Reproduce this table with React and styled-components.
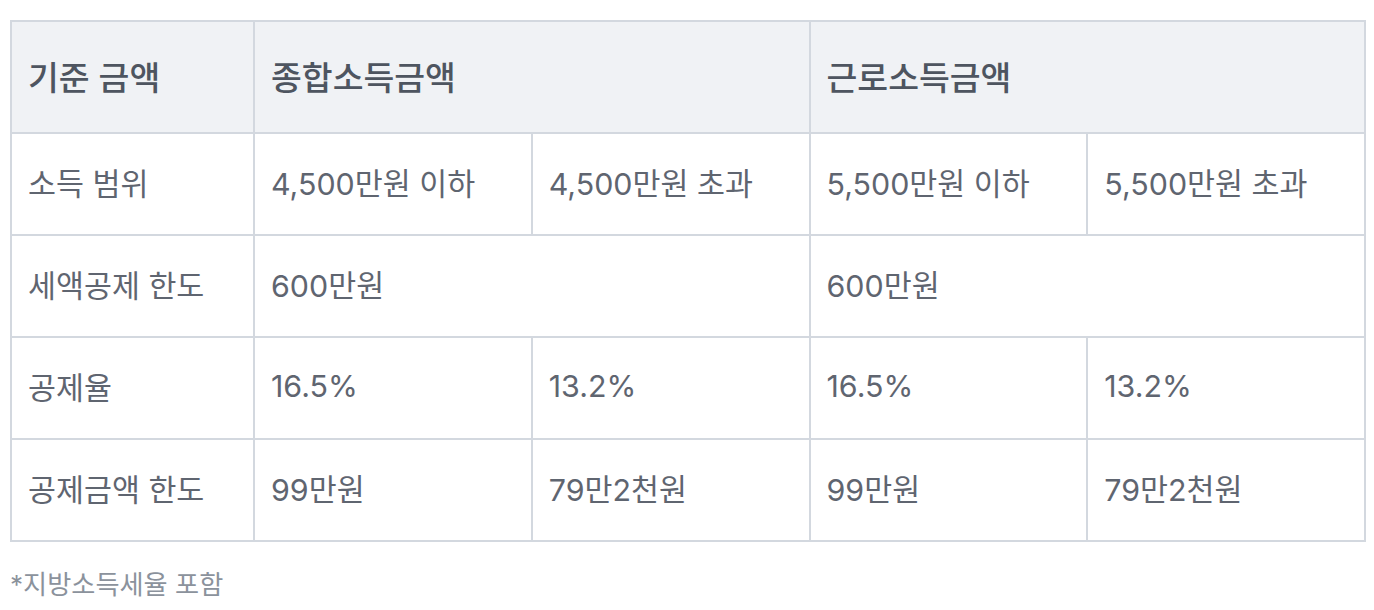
import styled, { createGlobalStyle } from 'styled-components';

const GlobalStyle = createGlobalStyle`
  body {
    margin: 0;
    background: #ffffff;
    font-family: Inter, "Noto Sans CJK KR", sans-serif;
  }
`

const Wrapper = styled.div`
  padding: 20px 8px 0 10px;
`
const Table = styled.table`
  width: 100%;
  border-collapse: collapse;
  table-layout: fixed;
  border: 2px solid #d3d8df;
`
const HeadCell = styled.th`
  background-color: #f0f2f5;
  color: #4e5560;
  font-size: 33.5px;
  font-weight: 500;
  text-align: left;
  height: 106px;
  padding: 0 0 4px 16px;
  border: 2px solid #d3d8df;
`
const Cell = styled.td`
  color: #5f6570;
  font-size: 30.4px;
  font-weight: 400;
  height: 96px;
  padding: 0 0 4px 16px;
  border: 2px solid #d3d8df;
  vertical-align: middle;
`
const Note = styled.p`
  margin: 22px 0 0;
  color: #8b929c;
  font-size: 26.2px;
`

const rows = [
  { label: '소득 범위', cells: ['4,500만원 이하', '4,500만원 초과', '5,500만원 이하', '5,500만원 초과'] },
  { label: '세액공제 한도', merged: ['600만원', '600만원'] },
  { label: '공제율', cells: ['16.5%', '13.2%', '16.5%', '13.2%'] },
  { label: '공제금액 한도', cells: ['99만원', '79만2천원', '99만원', '79만2천원'] },
];

const App = () => {
  return (
    <Wrapper>
      <GlobalStyle />
      <Table>
        <colgroup>
          <col style={{ width: 243 }} />
          <col />
          <col />
          <col />
          <col />
        </colgroup>
        <thead>
          <tr>
            <HeadCell>기준 금액</HeadCell>
            <HeadCell colSpan={2}>종합소득금액</HeadCell>
            <HeadCell colSpan={2}>근로소득금액</HeadCell>
          </tr>
        </thead>
        <tbody>
          {rows.map(row => (
            <tr key={row.label}>
              <Cell>{row.label}</Cell>
              {row.merged
                ? row.merged.map((m, i) => <Cell key={i} colSpan={2}>{m}</Cell>)
                : row.cells.map((c, i) => <Cell key={i}>{c}</Cell>)}
            </tr>
          ))}
        </tbody>
      </Table>
      <Note>*지방소득세율 포함</Note>
    </Wrapper>
  );
};

export default App;
